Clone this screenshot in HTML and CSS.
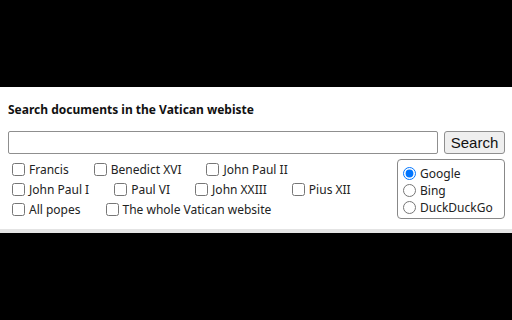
FILE: index.html
```html
<!DOCTYPE html>
<html lang="en">
<head>
    <meta charset="UTF-8">
    <title>Vatican search</title>
    <link rel="stylesheet" href="styles.css">
</head>
<body>
    <div class="top-bar"></div>

    <div class="panel">
        <h3 class="title">Search documents in the Vatican webiste</h3>

        <form class="search-row">
            <input type="text" class="query" id="query">
            <button type="submit" class="search-btn">Search</button>
        </form>

        <div class="options">
            <div class="popes">
                <div class="row">
                    <label class="item"><input type="checkbox">Francis</label>
                    <label class="item"><input type="checkbox">Benedict XVI</label>
                    <label class="item"><input type="checkbox">John Paul II</label>
                </div>
                <div class="row">
                    <label class="item"><input type="checkbox">John Paul I</label>
                    <label class="item"><input type="checkbox">Paul VI</label>
                    <label class="item"><input type="checkbox">John XXIII</label>
                    <label class="item"><input type="checkbox">Pius XII</label>
                </div>
                <div class="row">
                    <label class="item"><input type="checkbox">All popes</label>
                    <label class="item"><input type="checkbox">The whole Vatican website</label>
                </div>
            </div>

            <div class="engines">
                <label class="engine"><input type="radio" name="engine" checked>Google</label>
                <label class="engine"><input type="radio" name="engine">Bing</label>
                <label class="engine"><input type="radio" name="engine">DuckDuckGo</label>
            </div>
        </div>
    </div>

    <div class="bottom-line"></div>
</body>
</html>
```

FILE: styles.css
```css
body {
    margin: 0;
    background-color: #000;
    font-family: "Noto Sans", sans-serif;
    font-size: 12px;
    color: #222;
}
.top-bar {
    height: 87px;
}
.panel {
    background: #fff;
    padding: 13px 7px 10px 8px;
}
.title {
    margin: 0 0 11px 0;
    font-size: 12px;
    font-weight: bold;
    line-height: 20px;
    color: #111;
}
.search-row {
    display: flex;
    gap: 6px;
    margin: 0;
}
.query {
    flex: 1;
    height: 23px;
    box-sizing: border-box;
    border: 1px solid #8f8f8f;
    border-radius: 2px;
    margin: 0;
}
.search-btn {
    width: 61px;
    height: 23px;
    font-family: Arial, "Liberation Sans", sans-serif;
    font-size: 15px;
    background: #efefef;
    border: 1px solid #8f8f8f;
    border-radius: 3px;
    padding: 0;
    color: #111;
}
.options {
    display: flex;
    justify-content: space-between;
    align-items: flex-start;
    margin-top: 5px;
}
.row {
    display: flex;
    gap: 21px;
    height: 20px;
    align-items: center;
}
.item {
    display: flex;
    align-items: center;
}
.item input {
    margin: 0 4px 0 4px;
}
.engine input {
    margin: 0 4px 0 5px;
}
.engines {
    width: 108px;
    height: 60px;
    border: 1px solid #888;
    border-radius: 4px;
    padding: 5px 0 0 0;
    box-sizing: border-box;
    display: flex;
    flex-direction: column;
}
.engine {
    display: flex;
    align-items: center;
    height: 17px;
}
.bottom-line {
    height: 4px;
    background: #e4e4e4;
}
```
